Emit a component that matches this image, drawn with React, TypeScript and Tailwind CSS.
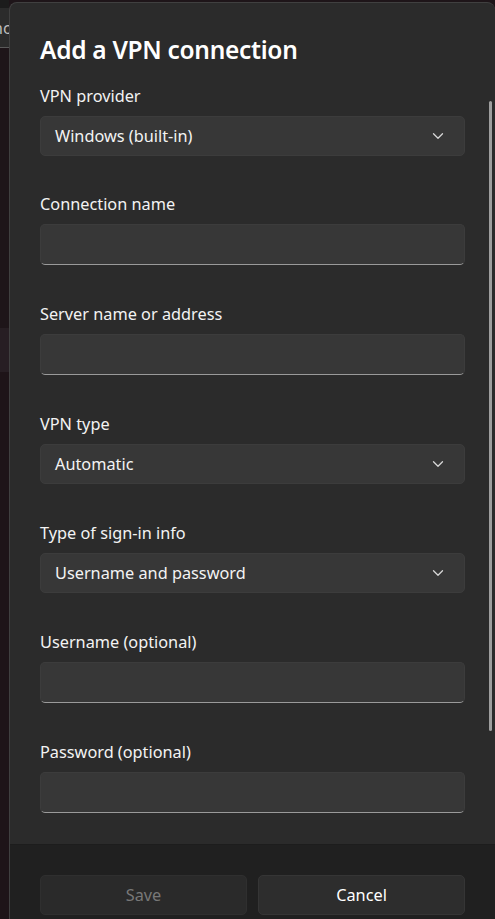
import React from "react";

const font = { fontFamily: '"Noto Sans", "Open Sans", sans-serif' };

function Chevron() {
  return (
    <svg width="12" height="8" viewBox="0 0 12 8" className="shrink-0">
      <path d="M1.5 1.75 L6 6.25 L10.5 1.75" fill="none" stroke="#d6d6d6" strokeWidth="1.3" strokeLinecap="round" strokeLinejoin="round" />
    </svg>
  );
}

function Select({ value }: { value: string }) {
  return (
    <div className="h-[40px] rounded-[5px] bg-[#373737] border border-[#3c3c3c] flex items-center justify-between pl-[14px] pr-[20px]">
      <span className="text-[16.3px] text-[#f3f3f3]">{value}</span>
      <Chevron />
    </div>
  );
}

function Input() {
  return (
    <div className="h-[41px] rounded-[5px] bg-[#373737] border border-[#3c3c3c] border-b-[#9a9a9a]" />
  );
}

function Field({ label, children, gap }: { label: string; children: React.ReactNode; gap: string }) {
  return (
    <div className={gap}>
      <div className="h-[20px] leading-[20px] text-[16.3px] text-[#f3f3f3] mb-[10px]">{label}</div>
      {children}
    </div>
  );
}

export default function App() {
  return (
    <div className="w-[495px] h-[919px] flex bg-[#1e1519] overflow-hidden" style={font}>
      <div className="w-[9px] shrink-0 flex flex-col">
        <div className="h-[8px] bg-[#1c1c1c]" />
        <div className="h-[40px] bg-[#2b2b2b] border-b border-[#5a5a5a] overflow-hidden flex items-center">
          <span className="text-[16px] text-[#bdbdbd] -ml-[7px]">nc</span>
        </div>
        <div className="h-[280px] bg-[#1e1519]" />
        <div className="h-[44px] bg-[#271e23]" />
        <div className="flex-1 bg-[#1e1418]" />
      </div>
      <div className="flex-1 mt-[2px] rounded-t-[8px] border-l border-t border-[#404040] bg-[#2b2b2b] flex flex-col relative">
        <div className="flex-1 pl-[30px] pr-[30px] pt-[30px]">
          <div className="text-[24.5px] font-semibold leading-[34px] text-white mb-[19px] tracking-[-0.3px]">Add a VPN connection</div>
          <Field label="VPN provider" gap="mb-[38px]"><Select value="Windows (built-in)" /></Field>
          <Field label="Connection name" gap="mb-[39px]"><Input /></Field>
          <Field label="Server name or address" gap="mb-[39px]"><Input /></Field>
          <Field label="VPN type" gap="mb-[39px]"><Select value="Automatic" /></Field>
          <Field label="Type of sign-in info" gap="mb-[39px]"><Select value="Username and password" /></Field>
          <Field label="Username (optional)" gap="mb-[39px]"><Input /></Field>
          <Field label="Password (optional)" gap=""><Input /></Field>
        </div>
        <div className="absolute left-[479px] top-[98px] w-[3px] h-[630px] rounded-full bg-[#9e9e9e]" />
        <div className="h-[75px] shrink-0 bg-[#202020] border-t border-[#1d1d1d] flex gap-[11px] pl-[30px] pr-[30px] pt-[30px]">
          <div className="w-[207px] h-[40px] rounded-[5px] bg-[#2a2a2a] border border-[#2f2f2f] flex items-center justify-center text-[16.3px] text-[#787878]">Save</div>
          <div className="w-[207px] h-[40px] rounded-[5px] bg-[#2d2d2d] border border-[#353535] flex items-center justify-center text-[16.3px] text-white">Cancel</div>
        </div>
      </div>
    </div>
  );
}
